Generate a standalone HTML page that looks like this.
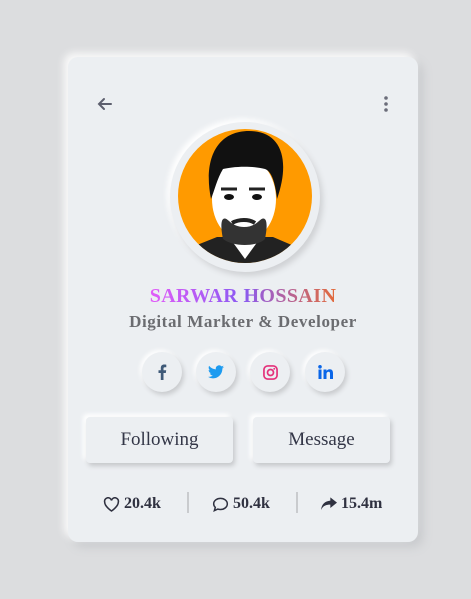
<!DOCTYPE html>
<html><head><meta charset="utf-8"><style>
*{margin:0;padding:0;box-sizing:border-box}
body{width:471px;height:599px;background:#dcdddf;font-family:"Liberation Serif",serif;position:relative;overflow:hidden}
.card{position:absolute;left:68px;top:57px;width:350px;height:485px;background:#eceff2;border-radius:10px;box-shadow:-4px -4px 8px #fafafa,5px 5px 10px #c8cacd}
.abs{position:absolute}
.name{position:absolute;left:68px;width:350px;top:285px;text-align:center;font-size:20px;font-weight:bold;letter-spacing:.4px}
.name span{background:linear-gradient(90deg,#e25cf8,#8a5af2 50%,#e36b3a);-webkit-background-clip:text;background-clip:text;color:transparent}
.sub{position:absolute;left:68px;width:350px;top:312px;text-align:center;font-size:17px;font-weight:bold;color:#6b6c70;letter-spacing:.6px}
.soc{position:absolute;width:40px;height:40px;border-radius:50%;background:#eceff2;box-shadow:2px 3px 5px #c9cbce,-2px -2px 4px #fff;display:flex;align-items:center;justify-content:center}
.btn{position:absolute;top:417px;height:46px;background:#eceff2;border-radius:4px;box-shadow:2px 3px 5px #c6c8cb,-3px -3px 5px #fff;font-size:19px;color:#333647;display:flex;align-items:center;justify-content:center}
.st{position:absolute;top:495px;font-size:16px;font-weight:bold;color:#2f3140;display:flex;align-items:center;gap:4px}
.sep{position:absolute;top:492px;width:2px;height:21px;background:#c9cbce}
</style></head><body>
<div class="card"></div>
<svg class="abs" style="left:96px;top:96px" width="18" height="16" viewBox="0 0 18 16"><path d="M15 8H3M8 3L3 8l5 5" stroke="#5d5f6e" stroke-width="2" fill="none" stroke-linecap="round"/></svg>
<svg class="abs" style="left:383px;top:96px" width="6" height="16"><circle cx="3" cy="2" r="1.8" fill="#6b6d7a"/><circle cx="3" cy="8" r="1.8" fill="#6b6d7a"/><circle cx="3" cy="14" r="1.8" fill="#6b6d7a"/></svg>
<div class="abs" style="left:170px;top:122px;width:150px;height:150px;border-radius:50%;background:#eceff2;box-shadow:3px 4px 6px #d0d2d5,-3px -3px 6px #fff"></div>
<svg class="abs" style="left:177px;top:129px" width="136" height="136" viewBox="0 0 136 136">
<defs><clipPath id="c"><circle cx="68" cy="67" r="67"/></clipPath></defs>
<g clip-path="url(#c)">
<rect width="136" height="136" fill="#ff9a00"/>
<path d="M0 136 L10 120 L40 108 L96 108 L124 120 L136 136Z" fill="#222"/>
<path d="M52 108 L68 130 L84 108 L84 100 L52 100Z" fill="#fff"/>
<ellipse cx="67" cy="70" rx="32" ry="42" fill="#fff"/>
<path d="M34 70 C26 30 40 2 72 2 C104 2 114 30 100 70 C98 52 94 42 88 40 C72 36 54 38 46 40 C40 50 38 60 34 70Z" fill="#111"/>
<path d="M46 110 C42 90 46 86 52 92 C60 100 74 100 82 92 C88 86 92 90 88 110 C80 118 56 118 46 110Z" fill="#333"/>
<ellipse cx="52" cy="68" rx="5" ry="3" fill="#111"/><ellipse cx="80" cy="68" rx="5" ry="3" fill="#111"/>
<path d="M44 60 L60 60 M72 60 L88 60" stroke="#222" stroke-width="3"/>
<path d="M55 94 C62 90 72 90 78 94" stroke="#222" stroke-width="4" fill="none"/>
</g></svg>
<div class="name"><span>SARWAR HOSSAIN</span></div>
<div class="sub">Digital Markter &amp; Developer</div>
<div class="soc" style="left:142px;top:352px"><svg width="10" height="16" viewBox="0 0 10 16"><path d="M6.5 16V9h2.3l.4-2.8H6.5V4.5c0-.8.3-1.3 1.4-1.3H9.3V.7C9 .6 8.1.5 7.2.5 5.1.5 3.8 1.8 3.8 4v2.2H1.5V9h2.3v7z" fill="#3f5a78"/></svg></div>
<div class="soc" style="left:196px;top:352px"><svg width="16" height="14" viewBox="0 0 24 20"><path d="M24 2.4a10 10 0 0 1-2.8.8A5 5 0 0 0 23.3.4a10 10 0 0 1-3.1 1.2A4.9 4.9 0 0 0 11.8 6 14 14 0 0 1 1.7.9a4.9 4.9 0 0 0 1.5 6.6 5 5 0 0 1-2.2-.6 4.9 4.9 0 0 0 3.9 4.9 5 5 0 0 1-2.2.1 4.9 4.9 0 0 0 4.6 3.4A9.9 9.9 0 0 1 0 17.3 14 14 0 0 0 7.5 19.5c9 0 14-7.5 14-14v-.6A10 10 0 0 0 24 2.4z" fill="#1d9bf0"/></svg></div>
<div class="soc" style="left:250px;top:352px"><svg width="15" height="15" viewBox="0 0 16 16"><rect x="1" y="1" width="14" height="14" rx="4" stroke="#e4307a" stroke-width="1.8" fill="none"/><circle cx="8" cy="8" r="3.2" stroke="#e4307a" stroke-width="1.8" fill="none"/><circle cx="12" cy="4" r="1" fill="#e4307a"/></svg></div>
<div class="soc" style="left:305px;top:352px"><svg width="15" height="14" viewBox="0 0 15 14"><rect x="0.5" y="4.5" width="3" height="9.5" fill="#0a66e8"/><circle cx="2" cy="1.8" r="1.8" fill="#0a66e8"/><path d="M5.5 4.5h3v1.5c.6-1 1.7-1.8 3.2-1.8 2.4 0 3.3 1.5 3.3 4V14h-3V8.8c0-1.2-.3-2-1.4-2s-2.1.8-2.1 2.2V14h-3z" fill="#0a66e8"/></svg></div>
<div class="btn" style="left:86px;width:147px">Following</div>
<div class="btn" style="left:253px;width:137px">Message</div>
<div class="st" style="left:103px"><svg width="17" height="15" viewBox="0 0 24 22"><path d="M12 20.5S2 14 2 7.5A5 5 0 0 1 12 5a5 5 0 0 1 10 2.5C22 14 12 20.5 12 20.5z" stroke="#2f3140" stroke-width="2.3" fill="none"/></svg>20.4k</div>
<div class="sep" style="left:187px"></div>
<div class="st" style="left:212px"><svg width="17" height="15" viewBox="0 0 24 22"><path d="M12 2C6.5 2 2 5.5 2 10c0 2 .9 3.8 2.4 5.2L3 20l5-2.3c1.2.4 2.6.6 4 .6 5.5 0 10-3.6 10-8.2S17.5 2 12 2z" stroke="#2f3140" stroke-width="2.2" fill="none"/></svg>50.4k</div>
<div class="sep" style="left:296px"></div>
<div class="st" style="left:321px"><svg width="16" height="14" viewBox="0 0 24 20"><path d="M14 0l10 8-10 8v-5C7 11 3 13 0 19 1 11 5 6 14 5z" fill="#2f3140"/></svg>15.4m</div>
</body></html>
